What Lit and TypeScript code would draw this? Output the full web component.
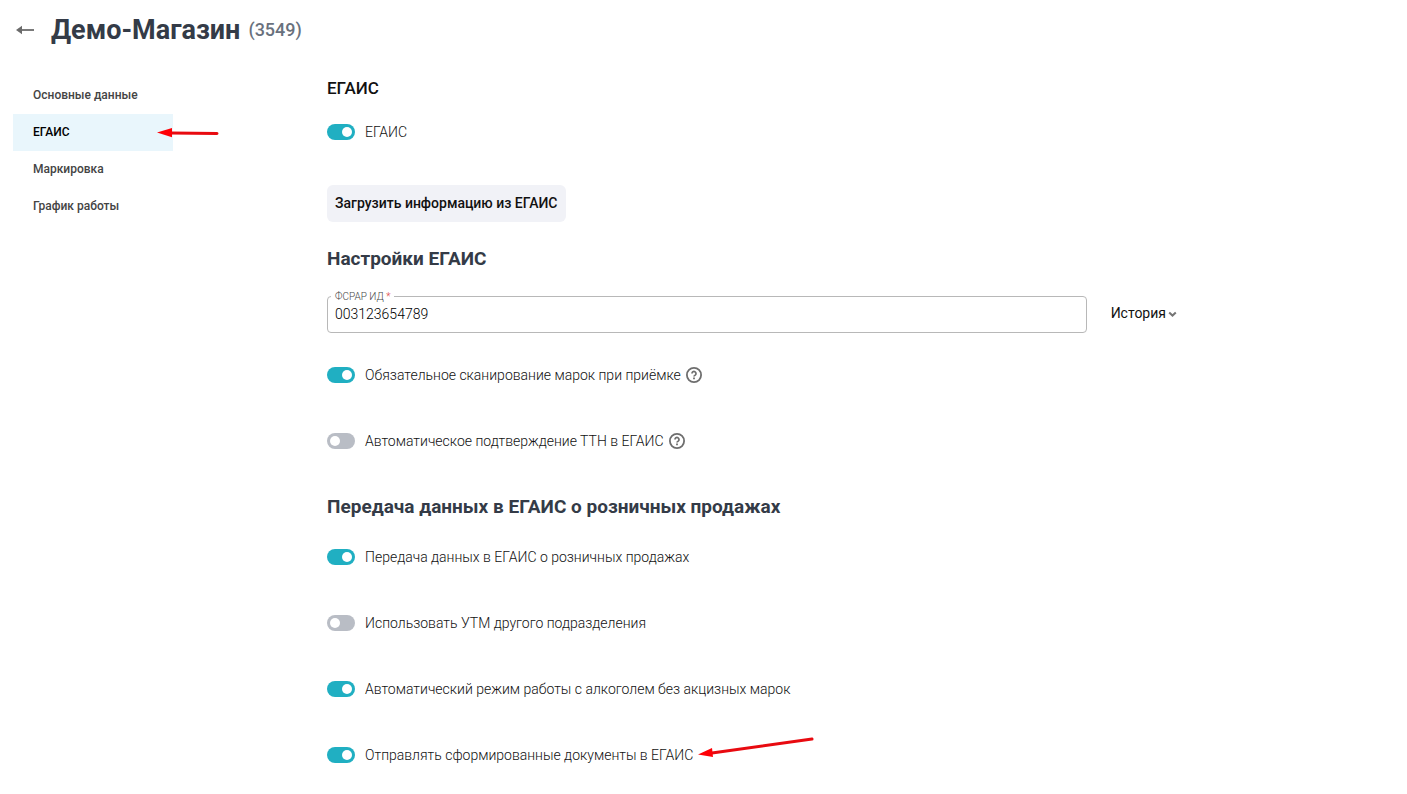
import { LitElement, html, css, svg, nothing } from "lit";
import { customElement, property, state } from "lit/decorators.js";
import { classMap } from "lit/directives/class-map.js";

@customElement("toggle-row")
class ToggleRow extends LitElement {
  @property() label = "";
  @property({ type: Boolean }) on = false;
  @property({ type: Boolean }) help = false;

  static styles = css`
    :host {
      display: flex;
      align-items: center;
      position: relative;
      height: 24px;
      gap: 5px;
    }
    .field {
      display: flex;
      align-items: center;
      gap: 10px;
      font-size: 14px;
      line-height: 24px;
      font-weight: 300;
      color: #111;
      cursor: pointer;
    }
    .switch {
      appearance: none;
      box-sizing: border-box;
      width: 28px;
      height: 16px;
      margin: 0;
      padding: 3px;
      border-radius: 8px;
      background: #b9bdc5;
      display: flex;
      cursor: pointer;
    }
    .switch::before {
      content: "";
      width: 10px;
      height: 10px;
      border-radius: 50%;
      background: #fff;
    }
    .switch:checked {
      background: #20afc2;
      justify-content: flex-end;
    }
    .help {
      display: flex;
      padding: 0;
      border: 0;
      background: none;
      cursor: pointer;
    }
  `;

  render() {
    return html`
      <label class="field">
        <input
          class="switch"
          type="checkbox"
          .checked=${this.on}
          @change=${(e: Event) => (this.on = (e.target as HTMLInputElement).checked)}
        />
        <span>${this.label}</span>
      </label>
      ${this.help
        ? html`<button class="help" type="button" aria-label="Справка">
            <svg width="16" height="16" viewBox="0 0 16 16" fill="none" stroke="#6e6e6e">
              <circle cx="8" cy="8" r="7.1" stroke-width="1.8" />
              <path d="M6 6.5a2 2 0 1 1 3.2 1.6c-.8.5-1.2.8-1.2 1.5" stroke-width="1.7" />
              <path d="M8 10.6v1.6" stroke-width="1.8" />
            </svg>
          </button>`
        : nothing}
      <slot></slot>
    `;
  }
}

const sections = ["Основные данные", "ЕГАИС", "Маркировка", "График работы"];

@customElement("app-root")
class AppRoot extends LitElement {
  @state() private active = 1;

  static styles = css`
    :host {
      display: block;
      font-family: Roboto, "Liberation Sans", sans-serif;
      background: #fff;
      color: #111;
    }
    .header {
      display: flex;
      align-items: center;
      padding: 8px 16px 0;
      height: 44px;
      gap: 17px;
    }
    .back {
      display: flex;
    }
    .title {
      display: flex;
      align-items: center;
      gap: 8px;
      margin: 0;
      font-size: 27px;
      line-height: 40px;
      font-weight: 700;
      color: #343b47;
    }
    .code {
      font-size: 18px;
      font-weight: 500;
      color: #69717d;
    }
    .layout {
      display: grid;
      grid-template-columns: 160px minmax(0, 1fr);
      column-gap: 154px;
      padding: 25px 13px 24px;
    }
    .nav {
      display: flex;
      flex-direction: column;
    }
    .item {
      position: relative;
      padding: 0 20px;
      font-size: 12px;
      line-height: 37px;
      font-weight: 500;
      color: #444;
      text-decoration: none;
    }
    .item.active {
      background: #e9f6fc;
      color: #000;
    }
    .pointer {
      position: absolute;
      pointer-events: none;
    }
    .pointer.short {
      left: 144px;
      top: 9px;
    }
    .pointer.long {
      left: 371px;
      top: -7px;
    }
    .main {
      display: flex;
      flex-direction: column;
      max-width: 850px;
    }
    .caption {
      margin: 0 0 21px;
      font-size: 17px;
      line-height: 22px;
      font-weight: 500;
    }
    .load {
      align-self: flex-start;
      margin: 41px 0 24px;
      height: 37px;
      padding: 0 8px 2px;
      border: 0;
      border-radius: 6px;
      background: #f1f2f7;
      font: 500 14px/24px Roboto, "Liberation Sans", sans-serif;
      color: #111;
      cursor: pointer;
    }
    .heading {
      margin: 0;
      font-size: 19px;
      line-height: 26px;
      font-weight: 700;
      color: #343b47;
    }
    .entry {
      display: flex;
      align-items: center;
      gap: 24px;
      margin: 24px 0 30px;
    }
    .box {
      position: relative;
      flex: 1;
      display: flex;
    }
    .label {
      position: absolute;
      left: 4px;
      top: -6px;
      padding: 0 4px;
      background: #fff;
      font-size: 10px;
      line-height: 14px;
      font-weight: 300;
      color: #444;
    }
    .star {
      color: #e04545;
    }
    .text {
      box-sizing: border-box;
      width: 100%;
      height: 37px;
      padding: 0 7px 2px;
      border: 1px solid #b8b8b8;
      border-radius: 4px;
      font: 300 14px/24px Roboto, "Liberation Sans", sans-serif;
      color: #000;
    }
    .history {
      display: flex;
      align-items: center;
      gap: 2px;
      padding: 0 0 4px;
      border: 0;
      background: none;
      font: 400 14px/24px Roboto, "Liberation Sans", sans-serif;
      color: #111;
      cursor: pointer;
    }
    .chevron {
      margin-top: 2px;
    }
    .group {
      display: flex;
      flex-direction: column;
      gap: 42px;
    }
    .sales {
      margin: 41px 0 25px;
    }
  `;

  private shortPointer = svg`
    <path d="M14 10L60 10.6" stroke="#e80a10" stroke-width="3" stroke-linecap="round" />
    <path d="M0 9.6L15 5V14.2Z" fill="#ff0006" />`;

  private longPointer = svg`
    <path d="M14 17L114 3" stroke="#e80a10" stroke-width="3" stroke-linecap="round" />
    <path d="M0 18.5L14 12L15 21Z" fill="#ff0006" />`;

  render() {
    return html`
      <header class="header">
        <a class="back" href="#" aria-label="Назад">
          <svg width="18" height="10" viewBox="0 0 18 10">
            <path d="M5 5H18" stroke="#6b6b6b" stroke-width="1.8" />
            <path d="M0 5L6 0.8V9.2Z" fill="#6b6b6b" />
          </svg>
        </a>
        <h1 class="title">Демо-Магазин <span class="code">(3549)</span></h1>
      </header>
      <div class="layout">
        <nav class="nav">
          ${sections.map(
            (name, i) => html`<a
              class=${classMap({ item: true, active: i === this.active })}
              href="#"
              @click=${(e: Event) => {
                e.preventDefault();
                this.active = i;
              }}
              >${name}${i === 1
                ? html`<svg class="pointer short" width="64" height="20">${this.shortPointer}</svg>`
                : nothing}</a
            >`
          )}
        </nav>
        <main class="main">
          <h2 class="caption">ЕГАИС</h2>
          <toggle-row label="ЕГАИС" on></toggle-row>
          <button class="load" type="button">Загрузить информацию из ЕГАИС</button>
          <h2 class="heading">Настройки ЕГАИС</h2>
          <div class="entry">
            <div class="box">
              <input class="text" id="fsrar" type="text" value="003123654789" required />
              <label class="label" for="fsrar">ФСРАР ИД <span class="star">*</span></label>
            </div>
            <button class="history" type="button">
              История
              <svg class="chevron" width="9" height="8" viewBox="0 0 9 8" fill="none">
                <path d="M1.2 2.5L4.5 5.6L7.8 2.5" stroke="#757575" stroke-width="2" />
              </svg>
            </button>
          </div>
          <div class="group">
            <toggle-row label="Обязательное сканирование марок при приёмке" on help></toggle-row>
            <toggle-row label="Автоматическое подтверждение ТТН в ЕГАИС" help></toggle-row>
          </div>
          <h2 class="heading sales">Передача данных в ЕГАИС о розничных продажах</h2>
          <div class="group">
            <toggle-row label="Передача данных в ЕГАИС о розничных продажах" on></toggle-row>
            <toggle-row label="Использовать УТМ другого подразделения"></toggle-row>
            <toggle-row label="Автоматический режим работы с алкоголем без акцизных марок" on></toggle-row>
            <toggle-row label="Отправлять сформированные документы в ЕГАИС" on>
              <svg class="pointer long" width="118" height="24">${this.longPointer}</svg>
            </toggle-row>
          </div>
        </main>
      </div>
    `;
  }
}
